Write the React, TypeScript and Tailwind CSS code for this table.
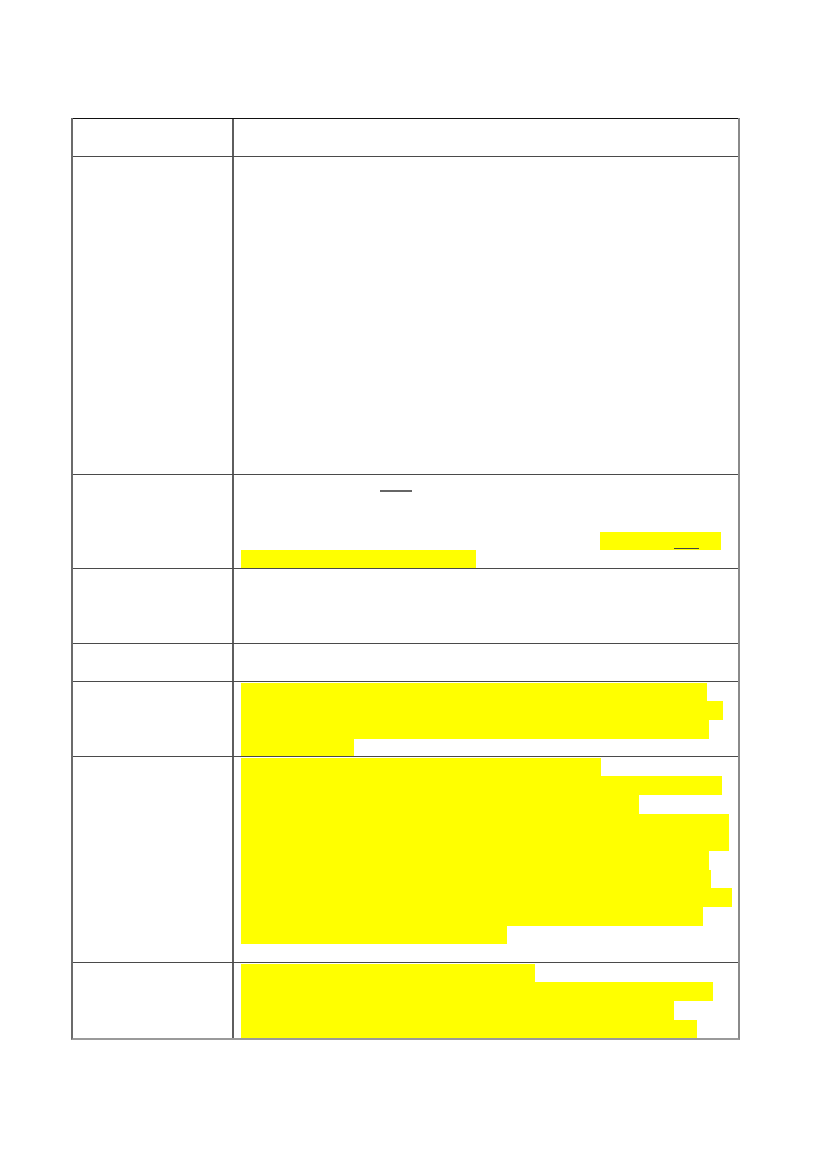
import React from "react";

type Bar = { x: number; w: number; u?: [number, number]; line?: boolean };
type Row = { h: number; lines: (Bar | null)[] };

// x / w are measured from the start of the text column (page x 241)
const rows: Row[] = [
  { h: 38, lines: [] },
  { h: 318, lines: [] },
  {
    h: 94,
    lines: [
      { x: 139, w: 32, line: true },
      null,
      null,
      { x: 359, w: 121, u: [74, 25] },
      { x: 0, w: 235 },
    ],
  },
  { h: 75, lines: [] },
  { h: 38, lines: [] },
  {
    h: 75,
    lines: [
      { x: 0, w: 466 },
      { x: 0, w: 482 },
      { x: 0, w: 468 },
      { x: 0, w: 113 },
    ],
  },
  {
    h: 206,
    lines: [
      { x: 0, w: 360 },
      { x: 0, w: 481 },
      { x: 0, w: 398 },
      { x: 0, w: 488 },
      { x: 0, w: 488 },
      { x: 0, w: 468 },
      { x: 0, w: 470 },
      { x: 0, w: 491 },
      { x: 0, w: 462 },
      { x: 0, w: 266 },
    ],
  },
  {
    h: 76,
    lines: [
      { x: 0, w: 294 },
      { x: 0, w: 472 },
      { x: 0, w: 433 },
      { x: 0, w: 456 },
    ],
  },
];

function Line({ bar }: { bar: Bar | null }) {
  return (
    <div className="flex h-[18.7px]">
      {bar && <div className="shrink-0" style={{ width: bar.x }} />}
      {bar && bar.line && (
        <div className="flex shrink-0 flex-col justify-end pb-[2px]" style={{ width: bar.w }}>
          <div className="h-[2px] bg-[#666]" />
        </div>
      )}
      {bar && !bar.line && (
        <div
          className="flex shrink-0 items-end bg-[#ffff00] pb-[1px]"
          style={{ width: bar.w }}
        >
          {bar.u && (
            <>
              <div className="shrink-0" style={{ width: bar.u[0] }} />
              <div className="h-[1px] bg-[#444]" style={{ width: bar.u[1] }} />
            </>
          )}
        </div>
      )}
    </div>
  );
}

export default function App() {
  return (
    <div className="min-h-[1169px] w-[827px] bg-white font-['Liberation_Sans',Arial,sans-serif]">
      <div className="pt-[118px] pl-[71px]">
        <div className="w-[669px] border-l-2 border-r-2 border-l-[#6b6b6b] border-r-[#8a8a8a] border-b-2 border-b-[#9a9a9a]">
          {rows.map((row, i) => (
            <div
              key={i}
              className={
                "flex border-t " +
                (i === 0 ? "border-t-[#111]" : "border-t-[#4a4a4a]")
              }
              style={{ height: row.h }}
            >
              <div className="w-[161px] shrink-0 border-r-2 border-r-[#5e5e5e]" />
              <div className="flex-1 overflow-hidden pl-[7px] pt-[0.5px]">
                {row.lines.map((b, j) => (
                  <Line key={j} bar={b} />
                ))}
              </div>
            </div>
          ))}
        </div>
      </div>
    </div>
  );
}
